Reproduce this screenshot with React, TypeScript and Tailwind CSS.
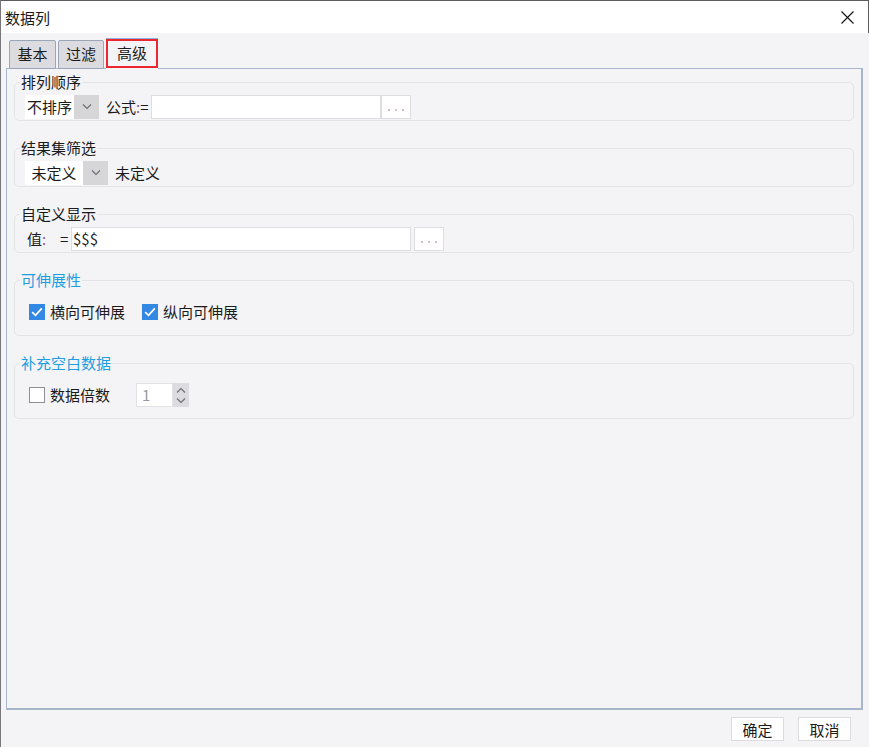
import React from 'react';

const font = { fontFamily: '"Noto Sans CJK SC", "Noto Sans", sans-serif' };

function Chevron({ up = false }: { up?: boolean }) {
  return (
    <svg width="10" height="6" viewBox="0 0 10 6" className="block">
      <path d={up ? 'M1 5.5 L5 1.5 L9 5.5' : 'M1 0.5 L5 4.5 L9 0.5'} fill="none" stroke="#707074" strokeWidth="1.2" />
    </svg>
  );
}

function Combo({ value, textW }: { value: string; textW: number }) {
  return (
    <div className="flex h-[24px]">
      <div className="flex items-center justify-center bg-white text-[15px] text-[#1b1b1b]" style={{ width: textW }}>
        {value}
      </div>
      <div className="flex w-[25px] items-center justify-center bg-[#d6d6d9]">
        <Chevron />
      </div>
    </div>
  );
}

function DotsButton() {
  return (
    <div className="flex h-[24px] w-[30px] items-end justify-center border border-[#dedee2] bg-white pb-[7px]">
      <div className="flex gap-[5px]">
        <span className="block h-[2px] w-[2px] bg-[#d4bccb]" />
        <span className="block h-[2px] w-[2px] bg-[#c9c9cf]" />
        <span className="block h-[2px] w-[2px] bg-[#d4bccb]" />
      </div>
    </div>
  );
}

function Check({ checked }: { checked: boolean }) {
  if (!checked) {
    return <div className="h-[16px] w-[16px] border border-[#8f8f93] bg-white" />;
  }
  return (
    <div className="flex h-[16px] w-[16px] items-center justify-center bg-[#3388e3]">
      <svg width="12" height="10" viewBox="0 0 12 10">
        <path d="M1.2 5.2 L4.5 8.3 L10.8 1.4" fill="none" stroke="#fff" strokeWidth="1.8" />
      </svg>
    </div>
  );
}

function Group({
  title,
  blue = false,
  className = '',
  children,
}: {
  title: string;
  blue?: boolean;
  className?: string;
  children: React.ReactNode;
}) {
  return (
    <fieldset className={`rounded-[5px] border border-[#e4e4e8] ${className}`}>
      <legend
        className={`ml-[5px] px-[1px] text-[15px] leading-[16px] ${blue ? 'text-[#1c9ee0]' : 'text-[#1b1b1b]'}`}
      >
        {title}
      </legend>
      {children}
    </fieldset>
  );
}

export default function App() {
  return (
    <div className="flex h-[747px] w-[869px] flex-col border-l border-[#77777b] bg-[#f4f4f7] text-[#1b1b1b]" style={font}>
      {/* title bar */}
      <div className="flex h-[33px] shrink-0 items-center justify-between border-t border-r border-[#5c5c60] bg-white pl-[4px] pr-[14px]">
        <span className="text-[15px] leading-none">数据列</span>
        <svg width="13" height="13" viewBox="0 0 13 13">
          <path d="M0.5 0.5 L12.5 12.5 M12.5 0.5 L0.5 12.5" stroke="#111" strokeWidth="1.1" />
        </svg>
      </div>

      {/* tabs */}
      <div className="flex h-[35px] shrink-0 items-end gap-[2px] pl-[8px]">
        <div className="relative -mb-px flex h-[29px] w-[47px] items-center justify-center rounded-t-[2px] border border-[#9aa6b8] bg-[#dcdce0] text-[15px]">
          基本
        </div>
        <div className="relative -mb-px flex h-[29px] w-[46px] items-center justify-center rounded-t-[2px] border border-[#9aa6b8] bg-[#dcdce0] text-[15px]">
          过滤
        </div>
        <div className="relative z-10 -mb-px flex h-[31px] w-[52px] flex-col border-t border-[#8fb4dc] bg-[#f4f4f7]">
          <div className="flex flex-1 items-center justify-center border-2 border-[#ea2630] text-[15px]">高级</div>
          <div className="h-[1px]" />
        </div>
      </div>

      {/* panel */}
      <div className="ml-[5px] mr-[6px] flex flex-1 flex-col border-t border-l border-r-2 border-b-2 border-[#a8b6cb] px-[7px] pt-[5px]">
        <Group title="排列顺序">
          <div className="flex items-center pl-[10px] pb-[1px] pt-[5px]">
            <Combo value="不排序" textW={49} />
            <span className="ml-[7px] text-[15px]">
              公式<span className="text-[#8a5a8e]">:</span>=
            </span>
            <div className="ml-[2px] h-[24px] w-[230px] border border-[#dedee2] bg-white" />
            <DotsButton />
          </div>
        </Group>

        <Group title="结果集筛选" className="mt-[19px]">
          <div className="flex items-center pl-[10px] pb-[1px] pt-[5px]">
            <Combo value="未定义" textW={58} />
            <span className="ml-[7px] text-[15px]">未定义</span>
          </div>
        </Group>

        <Group title="自定义显示" className="mt-[19px]">
          <div className="flex items-center pl-[12px] pb-[1px] pt-[5px]">
            <span className="w-[33px] text-[15px]">
              值<span className="text-[#8a5a8e]">:</span>
            </span>
            <span className="w-[11px] text-[15px]">=</span>
            <div className="flex h-[24px] w-[340px] items-center border border-[#dedee2] bg-white pl-[1px] text-[15px]">
              $$$
            </div>
            <div className="ml-[3px]">
              <DotsButton />
            </div>
          </div>
        </Group>

        <Group title="可伸展性" blue className="mt-[19px]">
          <div className="flex h-[24px] items-center pl-[14px] mt-[12px] mb-[11px]">
            <Check checked />
            <span className="ml-[5px] text-[15px]">横向可伸展</span>
            <div className="ml-[17px]">
              <Check checked />
            </div>
            <span className="ml-[5px] text-[15px]">纵向可伸展</span>
          </div>
        </Group>

        <Group title="补充空白数据" blue className="mt-[19px]">
          <div className="flex h-[24px] items-center pl-[14px] mt-[12px] mb-[11px]">
            <Check checked={false} />
            <span className="ml-[5px] text-[15px]">数据倍数</span>
            <div className="ml-[26px] flex h-[24px]">
              <div className="flex w-[37px] items-center border border-[#e2e2e6] bg-white pl-[5px] text-[15px] text-[#9a9aa0]">
                1
              </div>
              <div className="flex w-[16px] flex-col items-center justify-center gap-[5px] bg-[#dcdce0]">
                <Chevron up />
                <Chevron />
              </div>
            </div>
          </div>
        </Group>
      </div>

      {/* footer */}
      <div className="flex h-[37px] shrink-0 items-start justify-end gap-[14px] pr-[18px] pt-[7px]">
        <button className="h-[24px] w-[53px] border border-[#dcdce0] bg-white text-[15px] leading-none">确定</button>
        <button className="h-[24px] w-[53px] border border-[#dcdce0] bg-white text-[15px] leading-none">取消</button>
      </div>
    </div>
  );
}
